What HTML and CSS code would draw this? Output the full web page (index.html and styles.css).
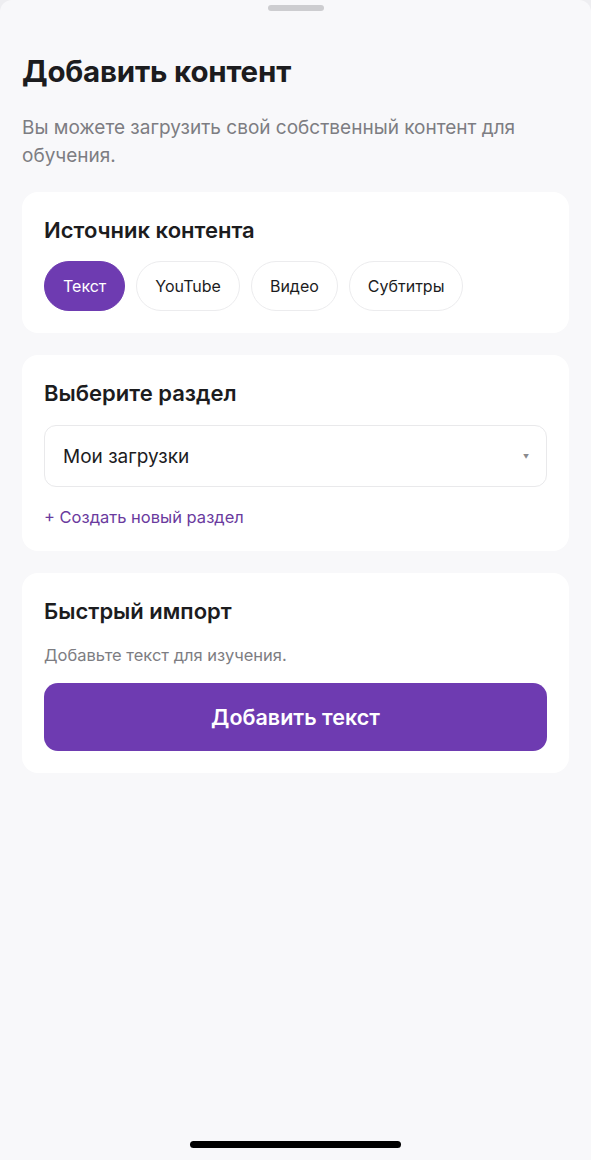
FILE: index.html
```html
<!DOCTYPE html>
<html lang="ru">
<head>
    <meta charset="UTF-8">
    <meta name="viewport" content="width=device-width, initial-scale=1.0">
    <title>Добавить контент</title>
    <link rel="stylesheet" href="styles.css">
</head>
<body>
    <div class="sheet">
        <div class="grabber"></div>

        <h1 class="title">Добавить контент</h1>
        <p class="subtitle">Вы можете загрузить свой собственный контент для обучения.</p>

        <div class="card">
            <h2>Источник контента</h2>
            <div class="chips">
                <button class="chip active">Текст</button>
                <button class="chip">YouTube</button>
                <button class="chip">Видео</button>
                <button class="chip">Субтитры</button>
            </div>
        </div>

        <div class="card">
            <h2>Выберите раздел</h2>
            <div class="select">
                <span>Мои загрузки</span>
                <span class="arrow">▼</span>
            </div>
            <a class="new-section" href="#">+ Создать новый раздел</a>
        </div>

        <div class="card">
            <h2>Быстрый импорт</h2>
            <p class="hint">Добавьте текст для изучения.</p>
            <button class="add-btn">Добавить текст</button>
        </div>

        <div class="home-indicator"></div>
    </div>
</body>
</html>
```

FILE: styles.css
```css
/* Reset default margin and padding */
* {
    margin: 0;
    padding: 0;
    box-sizing: border-box;
}

body {
    font-family: Inter, "Noto Sans", sans-serif;
    background-color: #eeeef1;
    color: #1c1c1e;
}

.sheet {
    background-color: #f8f8fa;
    border-radius: 12px 12px 0 0;
    height: 1160px;
    padding: 5px 22px 0;
    display: flex;
    flex-direction: column;
}

.grabber {
    width: 56px;
    height: 6px;
    border-radius: 3px;
    background-color: #cdcdd0;
    align-self: center;
}

.title {
    font-size: 29.5px;
    font-weight: 700;
    letter-spacing: -0.2px;
    margin-top: 40px;
    line-height: 40px;
}

.subtitle {
    font-size: 19px;
    line-height: 28px;
    color: #7d7d82;
    margin-top: 23px;
    padding-right: 30px;
}

.card {
    background-color: #fff;
    border-radius: 16px;
    padding: 23px 22px 22px;
    margin-top: 22px;
}

.card:first-of-type {
    margin-top: 17px;
}

.card h2 {
    font-size: 22px;
    font-weight: 600;
    line-height: 30px;
}

.chips {
    display: flex;
    gap: 11px;
    margin-top: 16px;
}

.chip {
    font-family: inherit;
    font-size: 16px;
    color: #1c1c1e;
    background-color: #fff;
    border: 1.5px solid #ececee;
    border-radius: 25px;
    height: 50px;
    padding: 0 18px;
    cursor: pointer;
}

.chip.active {
    background-color: #6e3bb1;
    border-color: #6e3bb1;
    color: #fff;
}

.select {
    display: flex;
    justify-content: space-between;
    align-items: center;
    height: 62px;
    margin-top: 17px;
    padding: 0 17px 0 18px;
    border: 1.5px solid #e9e9eb;
    border-radius: 12px;
    font-size: 19px;
}

.arrow {
    font-size: 6px;
    color: #8a8a8e;
}

.new-section {
    display: block;
    margin-top: 19px;
    margin-bottom: 1px;
    font-size: 16.5px;
    color: #6a3a9e;
    text-decoration: none;
    line-height: 22px;
}

.hint {
    font-size: 16.5px;
    color: #7d7d82;
    margin-top: 18px;
    line-height: 22px;
}

.add-btn {
    width: 100%;
    height: 68px;
    margin-top: 17px;
    border: none;
    border-radius: 14px;
    background-color: #6e3bb1;
    color: #fff;
    font-family: inherit;
    font-size: 21.5px;
    font-weight: 600;
    cursor: pointer;
}

.home-indicator {
    width: 211px;
    height: 7px;
    border-radius: 4px;
    background-color: #000;
    align-self: center;
    margin-top: auto;
    margin-bottom: 12px;
}
```
